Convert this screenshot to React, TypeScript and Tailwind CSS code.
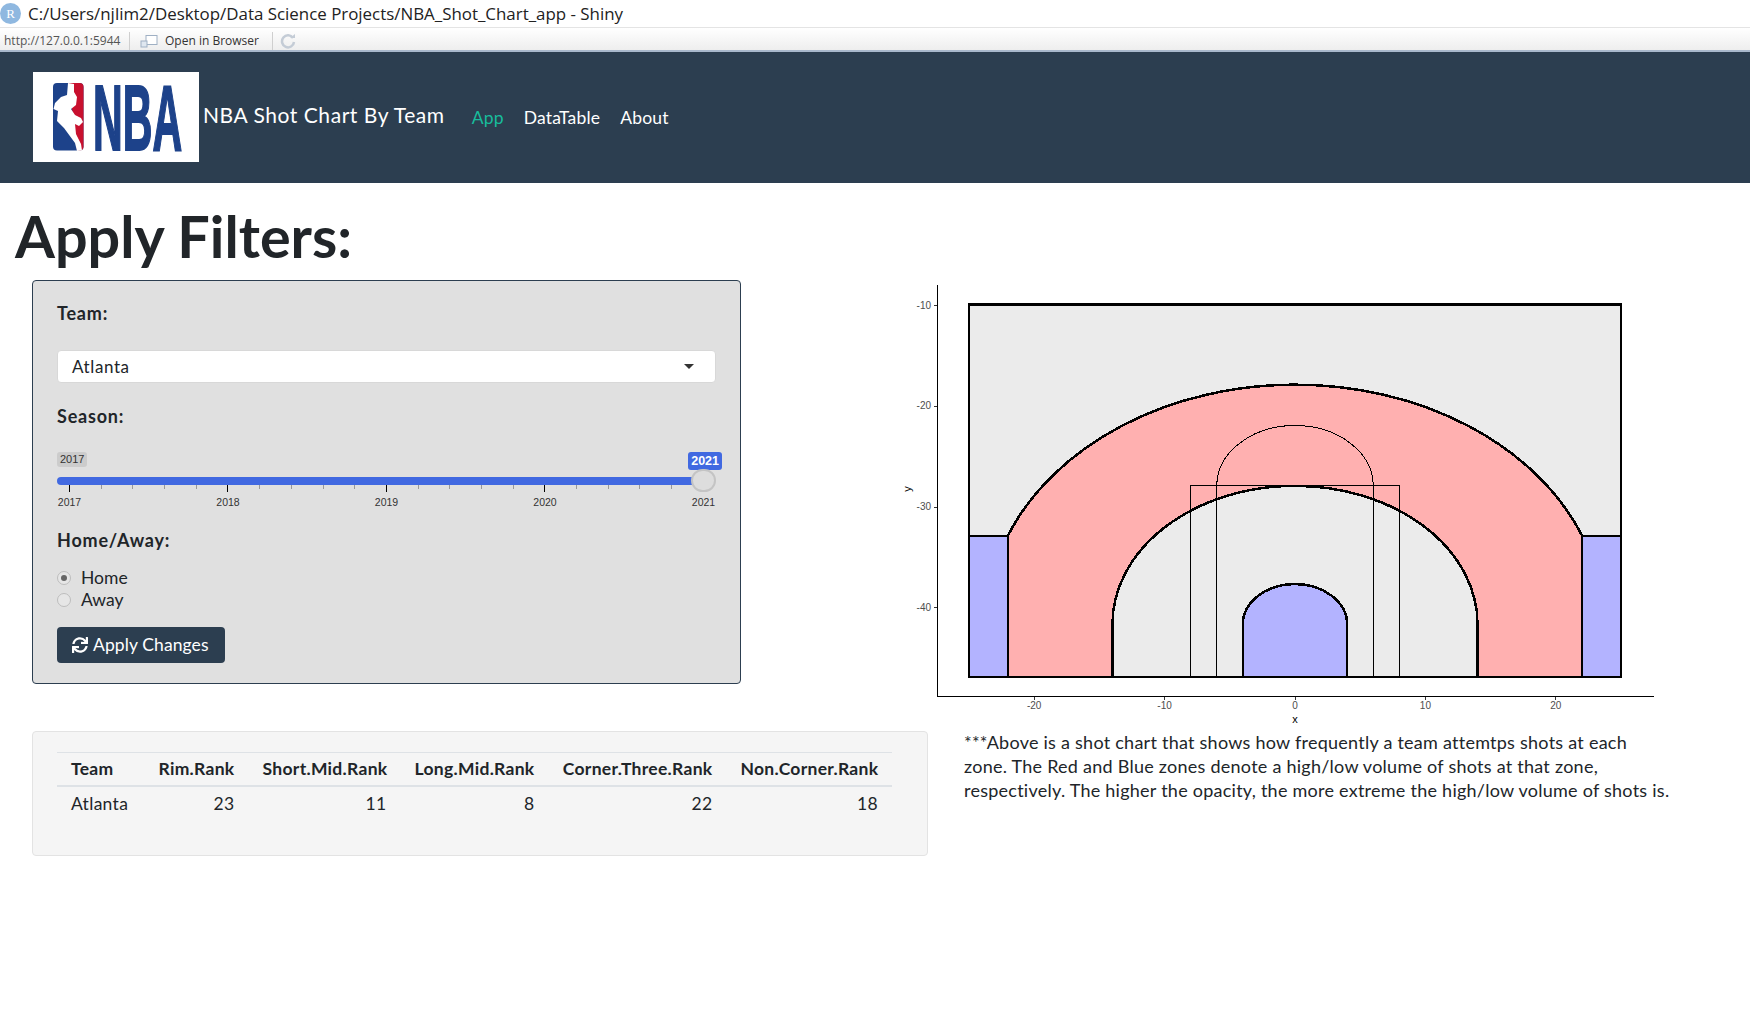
import { FaSync } from "react-icons/fa";

const X = (v: number) => 395 + 13.04 * v;
const Y = (v: number) => 24.6 + (-10 - v) * 10.07;
const RX = 13.04;
const RY = 10.07;

const threePoint = `M${X(-22)} ${Y(-47)} L${X(-22)} ${Y(-32.9)} A${23.7 * RX} ${23.8 * RY} 0 0 1 ${X(22)} ${Y(-32.9)} L${X(22)} ${Y(-47)} L${X(14)} ${Y(-47)} L${X(14)} ${Y(-41.75)} A${14 * RX} ${13.75 * RY} 0 0 0 ${X(-14)} ${Y(-41.75)} L${X(-14)} ${Y(-47)} Z`;
const restricted = `M${X(-4)} ${Y(-47)} L${X(-4)} ${Y(-41.75)} A${4 * RX} ${4 * RY} 0 0 1 ${X(4)} ${Y(-41.75)} L${X(4)} ${Y(-47)} Z`;
const freeThrow = `M${X(-6)} ${Y(-47)} L${X(-6)} ${Y(-28)} A${6 * RX} ${6 * RY} 0 0 1 ${X(6)} ${Y(-28)} L${X(6)} ${Y(-47)}`;

function ShotChart() {
	return (
		<svg width="790" height="450" className="block" shapeRendering="crispEdges">
			<rect x={X(-25)} y={Y(-10)} width={50 * RX} height={37 * RY} fill="#ebebeb" stroke="#000" strokeWidth="2.5" />
			<path d={threePoint} fill="#ffb0b0" stroke="#000" strokeWidth="2.5" />
			<rect x={X(-25)} y={Y(-33)} width={3 * RX} height={14 * RY} fill="#b3b3ff" stroke="#000" strokeWidth="2.5" />
			<rect x={X(22)} y={Y(-33)} width={3 * RX} height={14 * RY} fill="#b3b3ff" stroke="#000" strokeWidth="2.5" />
			<path d={restricted} fill="#b3b3ff" stroke="#000" strokeWidth="2.5" />
			<rect x={X(-8)} y={Y(-28)} width={16 * RX} height={19 * RY} fill="none" stroke="#000" strokeWidth="1" />
			<path d={freeThrow} fill="none" stroke="#000" strokeWidth="1" />
			<path d="M37.5 5 V416.5 H753.5" fill="none" stroke="#000" strokeWidth="1" />
			{[-40, -30, -20, -10].map((v) => (
				<g key={v}>
					<line x1="34" x2="37" y1={Y(v) + 1} y2={Y(v) + 1} stroke="#333" />
					<text x="31" y={Y(v) + 4} textAnchor="end" fontSize="10" fill="#4d4d4d" fontFamily="Liberation Sans">{v}</text>
				</g>
			))}
			{[-20, -10, 0, 10, 20].map((v) => (
				<g key={v}>
					<line x1={X(v)} x2={X(v)} y1="417" y2="420" stroke="#333" />
					<text x={X(v)} y="429" textAnchor="middle" fontSize="10" fill="#4d4d4d" fontFamily="Liberation Sans">{v}</text>
				</g>
			))}
			<text x={X(0)} y="443" textAnchor="middle" fontSize="11" fill="#000" fontFamily="Liberation Sans">x</text>
			<text x="0" y="0" transform="translate(11 209) rotate(-90)" textAnchor="middle" fontSize="11" fill="#000" fontFamily="Liberation Sans">y</text>
		</svg>
	);
}

function NbaLogo() {
	return (
		<div className="w-[166px] h-[90px] mb-[2px] bg-white shrink-0">
			<svg width="166" height="90" viewBox="0 0 166 90" className="overflow-visible">
				<rect x="20" y="11" width="30.5" height="67.5" rx="4" fill="#1d428a" />
				<path d="M36 11 H46.5 A4 4 0 0 1 50.5 15 V74.5 A4 4 0 0 1 46.5 78.5 H44 Z" fill="#c8102e" />
				<path d="M35 11 L41 12 L41 20 L44 25 L43 33 L38 37 L42 43 L48 46 L50 50 L46 54 L42 52 L43 62 L48 72 L49 78.5 L44 79 L42 71 L31 56 L24 49 L25 39 L20.5 37 L22 31 L28 25 L34 23 Z" fill="#fff" />
				<text transform="translate(60 78) scale(0.447 1)" x="0" y="0" fontFamily="Liberation Sans" fontWeight="700" fontSize="92" fill="#1d428a" stroke="#1d428a" strokeWidth="2">NBA</text>
			</svg>
		</div>
	);
}

function Slider() {
	const years = ["2017", "2018", "2019", "2020", "2021"];
	const ticks = Array.from({ length: 21 }, (_, i) => i);
	return (
		<div className="relative mt-6 font-['Liberation_Sans',sans-serif]">
			<div className="flex justify-between items-start h-[18px] -mr-[6px]">
				<span className="h-[15px] px-[3px] rounded-[3px] bg-[#cccccc] text-[#333] text-[11px] leading-[15px]">2017</span>
				<span className="h-[18px] px-[3px] rounded-[3px] bg-[#4169e1] text-white text-[12.5px] leading-[18px] font-bold">2021</span>
			</div>
			<div className="mt-[7px] h-2 rounded-l-[4px] bg-[#4169e1] mr-[12px]"></div>
			<span className="absolute right-0 top-[17px] w-[25px] h-[23px] rounded-full bg-[#dddddd] border-2 border-[#c4c4c4]"></span>
			<div className="flex justify-between px-[12px] items-start h-[7px]">
				{ticks.map((i) => (
					<span key={i} className={i % 5 === 0 ? "w-px h-[7px] bg-black" : "w-px h-[4px] bg-[#999]"}></span>
				))}
			</div>
			<div className="flex justify-between mt-[3px] text-[10.5px] leading-[14px] text-[#333]">
				{years.map((y) => (
					<span key={y} className="w-[25px] text-center">{y}</span>
				))}
			</div>
		</div>
	);
}

function Radio({ label, checked }: { label: string; checked?: boolean }) {
	return (
		<div className="flex items-center h-[22px] text-[17.5px] text-[#212529]">
			<span className="flex items-center justify-center w-[14px] h-[14px] rounded-full border border-[#bdbdbd] bg-[#e6e6e6] mr-[10px]">
				{checked && <span className="w-[6px] h-[6px] rounded-full bg-[#666]"></span>}
			</span>
			{label}
		</div>
	);
}

function RankTable() {
	return (
		<div className="mt-[47px] w-[896px] h-[125px] pt-[20px] px-[24px] bg-[#f5f5f5] border border-[#e3e3e3] rounded-[4px]">
			<table className="w-[835px] table-fixed border-t border-[#dee2e6] text-[17.5px] tracking-[0.3px] text-[#212529]">
				<thead>
					<tr className="h-[33px] border-b-2 border-[#dee2e6] font-bold">
						<th className="w-[87px] px-[14px] text-left">Team</th>
						<th className="w-[104.5px] px-[14px] text-right">Rim.Rank</th>
						<th className="w-[152px] px-[14px] text-right">Short.Mid.Rank</th>
						<th className="w-[148px] px-[14px] text-right">Long.Mid.Rank</th>
						<th className="w-[178px] px-[14px] text-right">Corner.Three.Rank</th>
						<th className="w-[165.5px] px-[14px] text-right">Non.Corner.Rank</th>
					</tr>
				</thead>
				<tbody>
					<tr className="h-[37px]">
						<td className="px-[14px]">Atlanta</td>
						<td className="px-[14px] text-right">23</td>
						<td className="px-[14px] text-right">11</td>
						<td className="px-[14px] text-right">8</td>
						<td className="px-[14px] text-right">22</td>
						<td className="px-[14px] text-right">18</td>
					</tr>
				</tbody>
			</table>
		</div>
	);
}

export default function App() {
	return (
		<div className="min-h-[1023px] bg-white font-['Lato',sans-serif] text-[#212529]">
			<div className="flex items-center h-[28px] border-b border-[#e4e4e4] font-['Open_Sans',sans-serif] text-[16.9px] text-[#222]">
				<span className="flex items-center justify-center w-[21px] h-[21px] rounded-full bg-[#8fb8e0] text-white text-[13px] font-['Liberation_Serif',serif] mr-[7px]">R</span>
				C:/Users/njlim2/Desktop/Data Science Projects/NBA_Shot_Chart_app - Shiny
			</div>
			<div className="flex items-center h-[24px] pt-[3px] bg-gradient-to-b from-white to-[#eeeeee] border-b-2 border-[#a9b8cc] font-['Open_Sans',sans-serif] text-[12px] text-[#333]">
				<span className="pl-[4px] w-[129px] text-[#555]">http://127.0.0.1:5944</span>
				<span className="w-px h-[18px] bg-[#cfcfcf]"></span>
				<svg width="18" height="14" viewBox="0 0 18 14" className="ml-[10px] mr-[7px]">
					<rect x="6" y="1.5" width="11" height="9" fill="#fff" stroke="#9fb0c4" />
					<rect x="1" y="7" width="6" height="6" fill="#dfe7f0" stroke="#9fb0c4" />
				</svg>
				<span className="w-[107px]">Open in Browser</span>
				<span className="w-px h-[18px] bg-[#cfcfcf]"></span>
				<svg width="18" height="16" viewBox="0 0 18 16" className="ml-[6px]">
					<path d="M14 5 A6 6 0 1 0 15 9" fill="none" stroke="#c4ccd6" strokeWidth="2.5" />
					<path d="M11 5 H16 V1 Z" fill="#c4ccd6" />
				</svg>
			</div>
			<nav className="flex items-center h-[131px] pl-[33px] bg-[#2c3e50] text-white">
				<NbaLogo />
				<span className="ml-[4px] text-[21px] tracking-[0.55px] -mt-[6px]">NBA Shot Chart By Team</span>
				<div className="flex items-center gap-[20px] ml-[27px] text-[17.5px] tracking-[0.2px] mt-[1px]">
					<span className="text-[#18bc9c]">App</span>
					<span>DataTable</span>
					<span>About</span>
				</div>
			</nav>
			<h1 className="flex items-center h-[97px] pt-[9px] pl-[15px] text-[57.5px] font-bold">Apply Filters:</h1>
			<div className="flex">
				<div className="ml-[32px] w-[868px] shrink-0">
					<div className="w-[709px] h-[404px] pt-[20px] px-[24px] bg-[#e0e0e0] border border-[#2c3e50] rounded-[4px]">
						<div className="h-6 leading-6 text-[18px] tracking-[0.8px] font-bold">Team:</div>
						<div className="flex items-center justify-between mt-[25px] h-[33px] pl-[14px] pr-[21px] bg-white border border-[#d8d8d8] rounded-[4px] text-[17px] tracking-[0.6px] w-[659px]">
							Atlanta
							<span className="w-0 h-0 border-x-[5px] border-x-transparent border-t-[5px] border-t-[#333]"></span>
						</div>
						<div className="mt-[21px] h-6 leading-6 text-[18px] tracking-[0.8px] font-bold">Season:</div>
						<Slider />
						<div className="mt-[19px] h-6 leading-6 text-[18px] tracking-[0.8px] font-bold">Home/Away:</div>
						<div className="mt-[15px]">
							<Radio label="Home" checked />
							<Radio label="Away" />
						</div>
						<button className="flex items-center gap-[5px] mt-[16px] h-9 w-[168px] pl-[15px] bg-[#2c3e50] text-white text-[17.5px] tracking-[0.1px] rounded-[4px]">
							<FaSync className="text-[16px]" />
							Apply Changes
						</button>
					</div>
					<RankTable />
				</div>
				<div>
					<ShotChart />
					<p className="ml-[64px] w-[710px] text-[18px] tracking-[0.25px] leading-[24px] text-[#212529]">
						***Above is a shot chart that shows how frequently a team attemtps shots at each zone. The Red and Blue zones denote a high/low volume of shots at that zone, respectively. The higher the opacity, the more extreme the high/low volume of shots is.
					</p>
				</div>
			</div>
		</div>
	);
}
